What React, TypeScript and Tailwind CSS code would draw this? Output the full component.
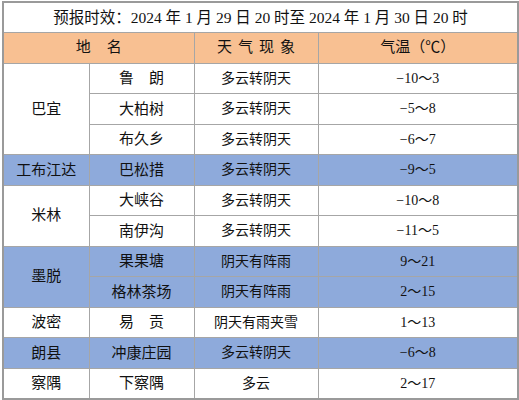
import React from 'react';

type Row = {
    county?: string;
    span?: number;
    place: string;
    weather: string;
    temp: string;
    blue: boolean;
};

const rows: Row[] = [
    { county: '巴宜', span: 3, place: '鲁\u3000朗', weather: '多云转阴天', temp: '−10～3', blue: false },
    { place: '大柏树', weather: '多云转阴天', temp: '−5～8', blue: false },
    { place: '布久乡', weather: '多云转阴天', temp: '−6～7', blue: false },
    { county: '工布江达', span: 1, place: '巴松措', weather: '多云转阴天', temp: '−9～5', blue: true },
    { county: '米林', span: 2, place: '大峡谷', weather: '多云转阴天', temp: '−10～8', blue: false },
    { place: '南伊沟', weather: '多云转阴天', temp: '−11～5', blue: false },
    { county: '墨脱', span: 2, place: '果果塘', weather: '阴天有阵雨', temp: '9～21', blue: true },
    { place: '格林茶场', weather: '阴天有阵雨', temp: '2～15', blue: true },
    { county: '波密', span: 1, place: '易\u3000贡', weather: '阴天有雨夹雪', temp: '1～13', blue: false },
    { county: '朗县', span: 1, place: '冲康庄园', weather: '多云转阴天', temp: '−6～8', blue: true },
    { county: '察隅', span: 1, place: '下察隅', weather: '多云', temp: '2～17', blue: false },
];

const cell = 'border border-[#a6a6a6] text-center align-middle p-0';

export default function App() {
    return (
        <div className="bg-white w-[519px] h-[400px] pt-px pl-[2px] font-['Liberation_Serif','Noto_Sans_CJK_SC',serif] text-[#111]">
            <table className="table-fixed border-collapse border-2 border-[#9a9a9a] w-[515px]">
                <colgroup>
                    <col className="w-[86px]" />
                    <col className="w-[105px]" />
                    <col className="w-[124px]" />
                    <col className="w-[200px]" />
                </colgroup>
                <tbody>
                    {/* title */}
                    <tr className="h-[30px]">
                        <td colSpan={4} className={`${cell} text-[15.5px]`}>
                            预报时效：2024 年 1 月 29 日 20 时至 2024 年 1 月 30 日 20 时
                        </td>
                    </tr>

                    {/* header */}
                    <tr className="h-[31px] bg-[#f8c092] text-[15px]">
                        <td colSpan={2} className={cell}>地<span className="inline-block w-[16px]" />名</td>
                        <td className={`${cell} tracking-[6px] pl-[6px]`}>天气现象</td>
                        <td className={cell}>气温（℃）</td>
                    </tr>

                    {rows.map((r, i) => (
                        <tr key={i} className={`h-[30.5px] text-[14px] ${r.blue ? 'bg-[#8eaadb]' : 'bg-white'}`}>
                            {r.county && (
                                <td rowSpan={r.span} className={`${cell} text-[15px]`}>{r.county}</td>
                            )}
                            <td className={`${cell} text-[15px]`}>{r.place}</td>
                            <td className={cell}>{r.weather}</td>
                            <td className={cell}>{r.temp}</td>
                        </tr>
                    ))}
                </tbody>
            </table>
        </div>
    );
}
